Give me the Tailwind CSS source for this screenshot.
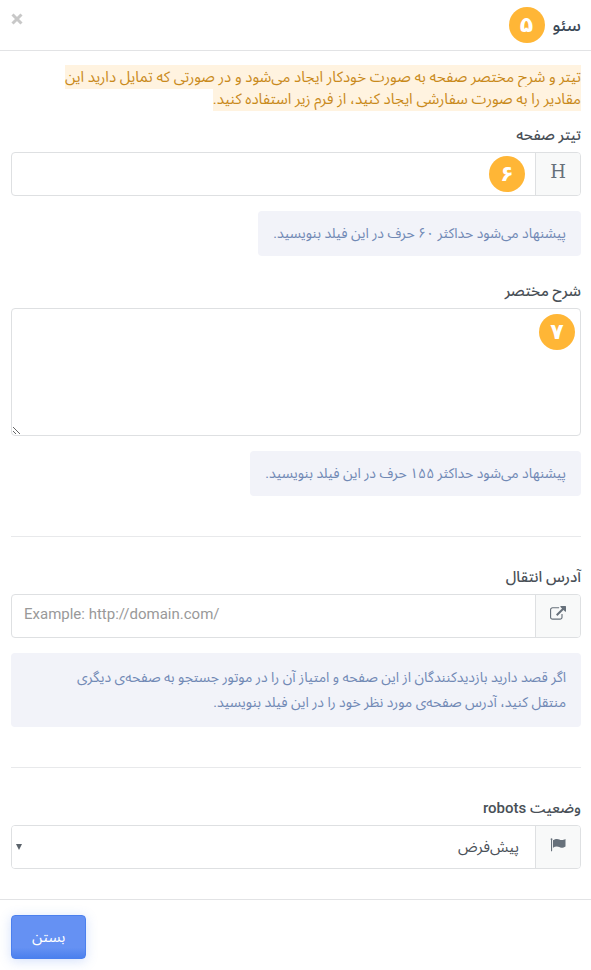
<!DOCTYPE html>
<html lang="fa" dir="rtl">
<head>
<meta charset="utf-8">
<meta name="viewport" content="width=device-width, initial-scale=1">
<title>سئو</title>
<script src="https://cdn.jsdelivr.net/npm/@tailwindcss/browser@4"></script>
</head>
<body class="bg-white text-[15px] leading-[22px] text-[#495057] font-[Roboto,'Noto_Sans_Arabic',serif]">
<header class="flex h-[51px] items-center border-b border-[#e2e3e5] pl-[11px] pr-[10px]">
  <h1 class="text-[17px] font-medium text-[#3b4856]">سئو</h1>
  <span class="mr-2 flex size-9 items-center justify-center rounded-full bg-[#ffb636] font-['DejaVu_Sans',sans-serif] text-[22px] font-bold text-white">۵</span>
  <button type="button" aria-label="بستن پنجره" class="mr-auto flex h-8 w-3 items-start justify-center pt-1 text-[#c8c8c8]">
    <svg class="size-3" viewBox="0 0 12 12" fill="none" stroke="currentColor" stroke-width="3"><path d="M1.500 1.500 10.500 10.500M10.500 1.500 1.500 10.500"/></svg>
  </button>
</header>
<main class="pt-[15px] pb-[30px] pl-[11px] pr-[10px]">
  <p class="text-[#c98a1b]"><mark class="bg-[#fff3e0] py-[3px] text-inherit">تیتر و شرح مختصر صفحه به صورت خودکار ایجاد می‌شود و در صورتی که تمایل دارید این<br>مقادیر را به صورت سفارشی ایجاد کنید، از فرم زیر استفاده کنید.</mark></p>

  <label for="title" class="mt-[14px] mb-[6px] block font-medium">تیتر صفحه</label>
  <div class="relative flex h-11 overflow-hidden rounded border border-[#dee0e2]">
    <span class="flex w-[45px] items-center justify-center border-l border-[#dee0e2] bg-[#f8f9f9] pb-1 font-['DejaVu_Serif',serif] text-[18px] text-[#67717b]">H</span>
    <input id="title" type="text" class="min-w-0 flex-1 px-3 outline-none">
    <span class="absolute top-[3px] right-[55px] flex size-9 items-center justify-center rounded-full bg-[#ffb636] font-['DejaVu_Sans',sans-serif] text-[22px] font-bold text-white">۶</span>
  </div>
  <p class="mt-[15px] w-fit rounded bg-[#f2f3f9] px-[15px] py-[10px] text-[14px] leading-[25px] text-[#7189b5]">پیشنهاد می‌شود حداکثر ۶۰ حرف در این فیلد بنویسید.</p>

  <label for="description" class="mt-[24px] mb-[6px] block font-medium">شرح مختصر</label>
  <div class="relative">
    <textarea id="description" class="block h-32 w-full rounded border border-[#dee0e2] px-3 py-2 outline-none"></textarea>
    <span class="absolute top-[6px] right-[6px] flex size-9 items-center justify-center rounded-full bg-[#ffb636] font-['DejaVu_Sans',sans-serif] text-[22px] font-bold text-white">۷</span>
  </div>
  <p class="mt-[15px] w-fit rounded bg-[#f2f3f9] px-[15px] py-[10px] text-[14px] leading-[25px] text-[#7189b5]">پیشنهاد می‌شود حداکثر ۱۵۵ حرف در این فیلد بنویسید.</p>

  <hr class="mt-[40px] mb-[29px] border-[#e8e9eb]">
  <label for="redirect" class="mb-[6px] block font-medium">آدرس انتقال</label>
  <div class="flex h-11 overflow-hidden rounded border border-[#dee0e2]">
    <span class="flex w-[45px] items-center justify-center border-l border-[#dee0e2] bg-[#f8f9f9] pb-1 text-[#67717b]">
      <svg class="size-4" viewBox="0 0 1792 1792" fill="currentColor"><path d="M1408 928v320q0 119-84.500 203.500T1120 1536H288q-119 0-203.500-84.500T0 1248V416q0-119 84.500-203.500T288 128h704q14 0 23 9t9 23v64q0 14-9 23t-23 9H288q-66 0-113 47t-47 113v832q0 66 47 113t113 47h832q66 0 113-47t47-113V928q0-14 9-23t23-9h64q14 0 23 9t9 23zM1792 64v512q0 26-19 45t-45 19-45-19l-176-176-652 652q-10 10-23 10t-23-10L695 983q-10-10-10-23t10-23l652-652-176-176q-19-19-19-45t19-45 45-19h512q26 0 45 19t19 45z"/></svg>
    </span>
    <input id="redirect" type="url" dir="ltr" placeholder="Example: http://domain.com/" class="min-w-0 flex-1 px-3 pb-1 text-left outline-none placeholder:text-[#999]">
  </div>
  <p class="mt-[15px] rounded bg-[#f2f3f9] px-[15px] py-3 text-[14px] leading-[25px] text-[#7189b5]">اگر قصد دارید بازدیدکنندگان از این صفحه و امتیاز آن را در موتور جستجو به صفحه‌ی دیگری<br>منتقل کنید، آدرس صفحه‌ی مورد نظر خود را در این فیلد بنویسید.</p>

  <hr class="mt-[40px] mb-[29px] border-[#e8e9eb]">
  <label for="robots" class="mb-[6px] block font-medium">وضعیت robots</label>
  <div class="relative flex h-11 overflow-hidden rounded border border-[#dee0e2]">
    <span class="flex w-[45px] items-center justify-center border-l border-[#dee0e2] bg-[#f8f9f9] pb-1 text-[#67717b]">
      <svg class="size-4" viewBox="0 0 16 16" fill="currentColor"><path d="M1.500 1.200a1 1 0 0 1 .6 1.800v11.300H1V3a1 1 0 0 1 .5-1.800zM3 3.200C4.500 2.400 5.600 2 7 2c2 0 2.900 1.100 4.600 1.100 1.300 0 2.500-.6 3.900-1.200v7.500c-1.300.7-2.500 1.300-4 1.300-1.800 0-2.800-1.100-4.700-1.100-1.300 0-2.500.5-3.800 1.200z"/></svg>
    </span>
    <select id="robots" class="min-w-0 flex-1 appearance-none bg-white px-4 outline-none"><option>پیش‌فرض</option></select>
    <svg class="pointer-events-none absolute top-[18px] left-1 h-[6px] w-[6px] text-[#5b636b]" viewBox="0 0 6 6" fill="currentColor"><path d="M0 0h6L3 6z"/></svg>
  </div>
</main>
<footer class="flex justify-end border-t border-[#e2e3e5] py-[15px] pl-[11px] pr-[10px]">
  <button type="button" class="h-11 rounded border border-[#4b80ee] bg-linear-to-b from-[#6591f3] from-75% to-[#4b80ee] px-5 text-white shadow-[0_2px_12px_rgba(80,130,240,0.25)]">بستن</button>
</footer>
</body>
</html>
